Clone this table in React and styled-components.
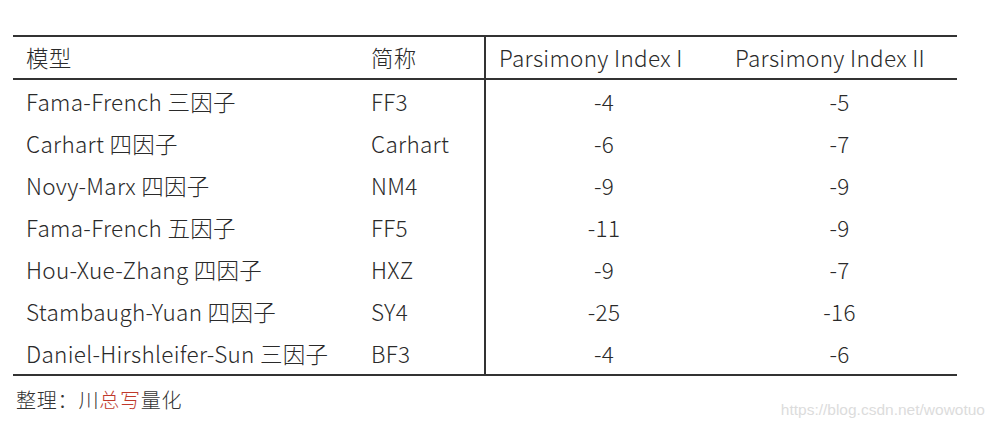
import styled, { createGlobalStyle } from "styled-components";

const GlobalStyle = createGlobalStyle`
  html, body {
    margin: 0;
    padding: 0;
    background: #fff;
  }
  body {
    font-family: "Noto Sans CJK SC", "Noto Sans", sans-serif;
    color: #222;
  }
`;

const rows = [
  { model: "Fama-French 三因子", abbr: "FF3", p1: "-4", p2: "-5" },
  { model: "Carhart 四因子", abbr: "Carhart", p1: "-6", p2: "-7" },
  { model: "Novy-Marx 四因子", abbr: "NM4", p1: "-9", p2: "-9" },
  { model: "Fama-French 五因子", abbr: "FF5", p1: "-11", p2: "-9" },
  { model: "Hou-Xue-Zhang 四因子", abbr: "HXZ", p1: "-9", p2: "-7" },
  { model: "Stambaugh-Yuan 四因子", abbr: "SY4", p1: "-25", p2: "-16" },
  { model: "Daniel-Hirshleifer-Sun 三因子", abbr: "BF3", p1: "-4", p2: "-6" },
];

const Page = styled.div`
  position: relative;
  width: 1000px;
  height: 427px;
  padding: 35px 0 0 13px;
  box-sizing: border-box;
  overflow: hidden;
`;

const Table = styled.table`
  width: 944px;
  border-collapse: collapse;
  table-layout: fixed;
  border-top: 2px solid #333;
  border-bottom: 2px solid #333;
  font-size: 22.5px;
  font-weight: 300;
  line-height: 1.2;
  letter-spacing: 0.3px;
`;

const Col = styled.col`
  width: ${(p) => p.$w}px;
`;

const HeadRow = styled.tr`
  border-bottom: 2px solid #333;
`;

const Th = styled.th`
  height: 41px;
  padding: 0 0 0 13px;
  text-align: left;
  font-weight: 300;
  white-space: nowrap;
  color: #2a2a2a;
  border-left: ${(p) => (p.$divider ? "2px solid #333" : "none")};
`;

const Td = styled.td`
  height: 42px;
  padding: 0 0 0 ${(p) => (p.$center ? 0 : 13)}px;
  text-align: ${(p) => (p.$center ? "center" : "left")};
  white-space: nowrap;
  color: #2a2a2a;
  border-left: ${(p) => (p.$divider ? "2px solid #333" : "none")};
`;

const Footer = styled.div`
  margin-top: 9px;
  padding-left: 3px;
  font-size: 20px;
  font-weight: 300;
  color: #333;
  letter-spacing: 0.8px;
`;

const Red = styled.span`
  color: #c0392b;
`;

const Watermark = styled.div`
  position: absolute;
  right: 15px;
  bottom: 8px;
  font-family: "Liberation Sans", Arial, sans-serif;
  font-size: 15.5px;
  color: #dcdcdc;
`;

export default function App() {
  return (
    <>
      <GlobalStyle />
      <Page>
        <Table>
          <colgroup>
            <Col $w={345} />
            <Col $w={127} />
            <Col $w={237} />
            <Col $w={235} />
          </colgroup>
          <thead>
            <HeadRow>
              <Th>模型</Th>
              <Th>简称</Th>
              <Th $divider>Parsimony Index I</Th>
              <Th>Parsimony Index II</Th>
            </HeadRow>
          </thead>
          <tbody>
            {rows.map((r) => (
              <tr key={r.abbr}>
                <Td>{r.model}</Td>
                <Td>{r.abbr}</Td>
                <Td $center $divider>
                  {r.p1}
                </Td>
                <Td $center>{r.p2}</Td>
              </tr>
            ))}
          </tbody>
        </Table>
        <Footer>
          整理：川<Red>总写</Red>量化
        </Footer>
        <Watermark>https://blog.csdn.net/wowotuo</Watermark>
      </Page>
    </>
  );
}
